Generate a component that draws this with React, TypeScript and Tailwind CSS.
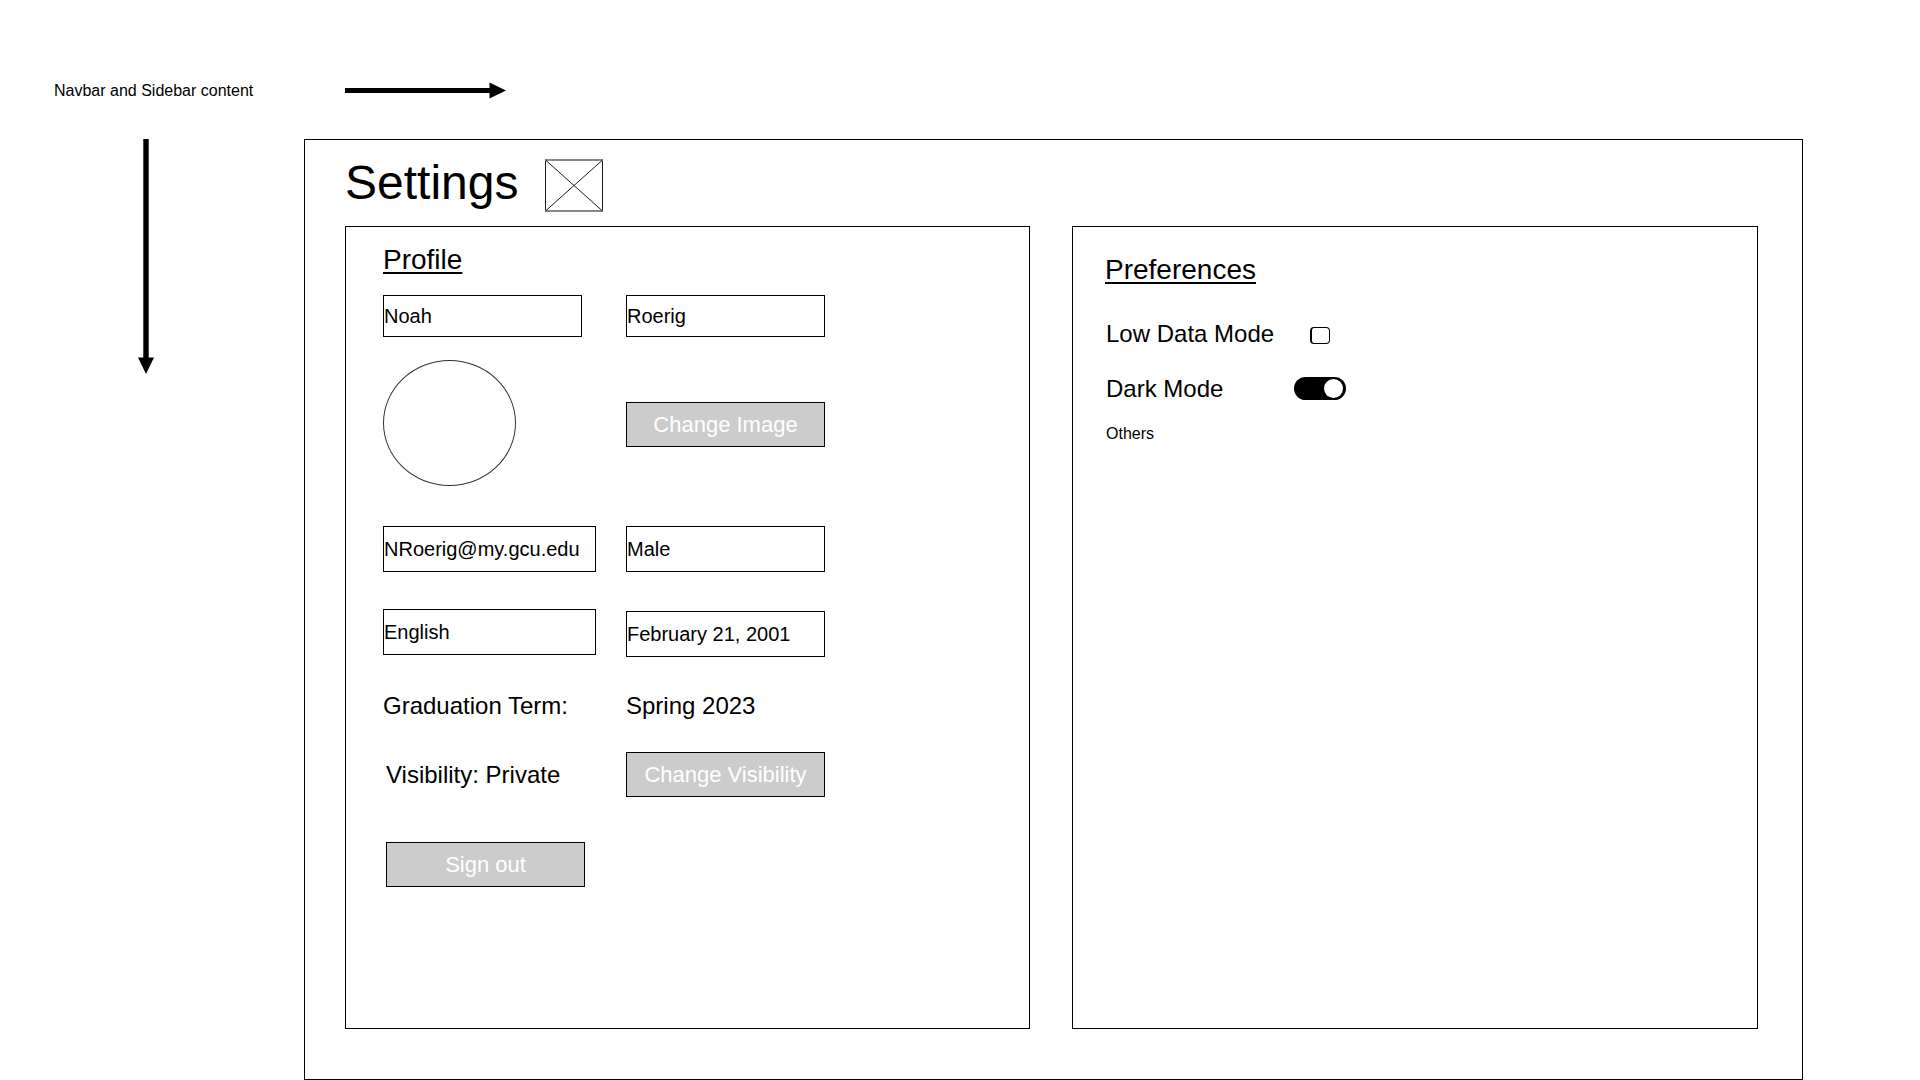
import { useState } from "react";

type FieldProps = { label: string; initial: string; className: string; type?: string };

function Field({ label, initial, className, type = "text" }: FieldProps) {
  const [value, setValue] = useState(initial);
  return (
    <input
      type={type}
      aria-label={label}
      value={value}
      onChange={(e) => setValue(e.target.value)}
      className={`block rounded-none border border-black bg-white p-0 text-[20px] text-black outline-none ${className}`}
    />
  );
}

function ActionButton({ text, className }: { text: string; className: string }) {
  return (
    <button
      type="button"
      className={`block h-[45px] w-[199px] cursor-pointer border border-black bg-[#cccccc] text-[22px] leading-[32px] text-white ${className}`}
    >
      {text}
    </button>
  );
}

function ImagePlaceholder() {
  return (
    <svg width="58" height="53" viewBox="0 0 58 53" fill="none" className="mt-0.5 shrink-0" aria-hidden="true">
      <g stroke="#1a1a1a">
        <path d="M0.5 0.5V52.5M57.5 0.5V52.5" />
        <path d="M0 1H58M0 52H58" stroke="#888" strokeWidth="2" />
        <path d="M0.5 1L57.5 52M57.5 1L0.5 52" />
      </g>
    </svg>
  );
}

function Profile() {
  return (
    <section className="border border-black pt-[17px] pl-[37px]">
      <h2 className="text-[28px] leading-[32px] underline decoration-2 underline-offset-[3px]">Profile</h2>
      <div className="mt-[19px] flex">
        <div className="w-[243px] shrink-0">
          <Field label="First name" initial="Noah" className="h-[42px] w-[199px]" />
          <div className="mt-[23px] h-[126px] w-[133px] rounded-[50%] border border-[#333333]" />
          <Field label="Email" type="email" initial="NRoerig@my.gcu.edu" className="mt-10 h-[46px] w-[213px]" />
          <Field label="Language" initial="English" className="mt-[37px] h-[46px] w-[213px]" />
          <p className="mt-[35px] text-[24px] leading-[32px]">Graduation Term:</p>
          <div className="pl-[3px]">
            <p className="mt-[37px] text-[24px] leading-[32px]">Visibility: Private</p>
            <ActionButton text="Sign out" className="mt-[51px]" />
          </div>
        </div>
        <div className="w-[199px] shrink-0">
          <Field label="Last name" initial="Roerig" className="h-[42px] w-[199px]" />
          <ActionButton text="Change Image" className="mt-[65px]" />
          <Field label="Gender" initial="Male" className="mt-[79px] h-[46px] w-[199px]" />
          <Field label="Date of birth" initial="February 21, 2001" className="mt-[39px] h-[46px] w-[199px]" />
          <p className="mt-[33px] text-[24px] leading-[32px]">Spring 2023</p>
          <ActionButton text="Change Visibility" className="mt-[30px]" />
        </div>
      </div>
    </section>
  );
}

function Preferences() {
  const [lowData, setLowData] = useState(false);
  const [dark, setDark] = useState(true);
  return (
    <section className="border border-black pt-[27px] pl-8">
      <h2 className="text-[28px] leading-[32px] underline decoration-2 underline-offset-[3px]">Preferences</h2>
      <div className="pl-px">
        <div className="mt-8 flex items-center">
          <label htmlFor="low-data" className="w-[188px] text-[24px] leading-[32px]">
            Low Data Mode
          </label>
          <div className="flex w-[52px] justify-center pt-[3px]">
            <input
              id="low-data"
              type="checkbox"
              checked={lowData}
              onChange={(e) => setLowData(e.target.checked)}
              className="h-[17px] w-5 appearance-none rounded-[4px] border border-l-2 border-black bg-white checked:bg-black"
            />
          </div>
        </div>
        <div className="mt-[23px] flex items-center">
          <label htmlFor="dark-mode" className="w-[188px] text-[24px] leading-[32px]">
            Dark Mode
          </label>
          <div className="relative h-6 w-[52px]">
            <input
              id="dark-mode"
              type="checkbox"
              role="switch"
              checked={dark}
              onChange={(e) => setDark(e.target.checked)}
              className="peer block h-[23px] w-full appearance-none rounded-full bg-black"
            />
            <span className="pointer-events-none absolute top-[2px] left-[3px] size-[19px] rounded-full bg-white peer-checked:left-[30px]" />
          </div>
        </div>
        <p className="mt-[17px] text-[16px] leading-[24px]">Others</p>
      </div>
    </section>
  );
}

export default function App() {
  return (
    <div className="flex min-h-screen flex-col bg-white font-['Liberation_Sans',Arial,sans-serif] text-black">
      <header className="flex items-start pt-[79px] pb-9 pl-[54px]">
        <p className="w-[291px] text-[16px] leading-[24px]">Navbar and Sidebar content</p>
        <svg width="161" height="18" viewBox="0 0 161 18" className="mt-[3px] shrink-0" aria-hidden="true">
          <path d="M0 6H144.500V0.500L161 8.500L144.500 16.500V11H0Z" />
        </svg>
      </header>
      <div className="flex flex-1">
        <aside className="w-[304px] shrink-0 pl-[138px]">
          <svg width="16" height="235" viewBox="0 0 16 235" aria-hidden="true">
            <path d="M5.300 0H10.700V218.500H16L8 235L0 218.500H5.300Z" />
          </svg>
        </aside>
        <main className="mr-[117px] flex flex-1 flex-col border border-black pt-[17px] pr-11 pb-[50px] pl-10">
          <div className="mb-[14px] flex items-start gap-[27px]">
            <h1 className="text-[48px] leading-[52px]">Settings</h1>
            <ImagePlaceholder />
          </div>
          <div className="grid flex-1 grid-cols-[685fr_686fr] gap-[42px]">
            <Profile />
            <Preferences />
          </div>
        </main>
      </div>
    </div>
  );
}
